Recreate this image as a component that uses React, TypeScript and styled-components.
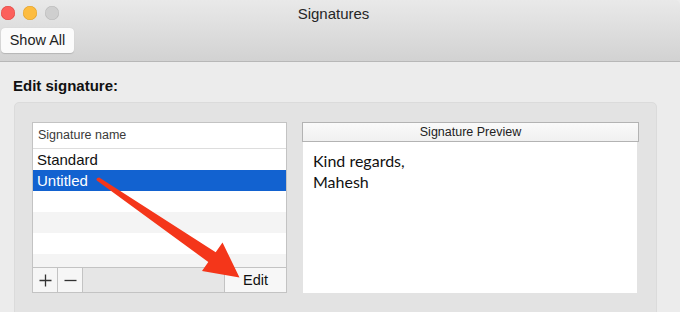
import React from 'react';
import styled, { createGlobalStyle } from 'styled-components';

const GlobalStyle = createGlobalStyle`
    html, body {
        margin: 0;
        padding: 0;
        background: #ececec;
        font-family: 'Liberation Sans', Arial, sans-serif;
        color: #1d1d1d;
    }
`;

const Window = styled.div`
    position: relative;
    width: 680px;
    height: 312px;
    overflow: hidden;
    background: #ececec;
`;

const TitleBar = styled.div`
    height: 61px;
    border-bottom: 1px solid #b7b7b7;
    border-top-right-radius: 5px;
    background: linear-gradient(#e9e9e9, #d2d2d2);
    display: flex;
    flex-direction: column;
`;

const TitleRow = styled.div`
    display: flex;
    align-items: center;
    height: 26px;
    padding-left: 1px;
`;

const Lights = styled.div`
    display: flex;
    gap: 8px;
    width: 60px;
`;

const Light = styled.span<{ $color: string; $edge: string }>`
    width: 14px;
    height: 14px;
    border-radius: 50%;
    background: ${(p) => p.$color};
    box-shadow: inset 0 0 0 0.5px ${(p) => p.$edge};
`;

const Title = styled.div`
    flex: 1;
    text-align: center;
    font-size: 15px;
    padding-right: 74px;
    color: #262626;
`;

const ToolRow = styled.div`
    display: flex;
    padding: 2px 0 0 1px;
`;

const ShowAll = styled.div`
    height: 25px;
    width: 73px;
    box-sizing: border-box;
    border-radius: 4px;
    background: #fbfbfb;
    box-shadow: 0 0.5px 1px rgba(0, 0, 0, 0.15);
    font-size: 14.5px;
    line-height: 25px;
    text-align: center;
    color: #222;
`;

const Content = styled.div`
    padding: 15px 0 0 13px;
`;

const SectionLabel = styled.div`
    font-size: 15px;
    font-weight: bold;
    line-height: 18px;
    color: #111;
`;

const GroupBox = styled.div`
    margin-top: 7px;
    margin-left: 1px;
    width: 643px;
    height: 230px;
    box-sizing: border-box;
    border: 1px solid #dbdbdb;
    border-radius: 5px;
    background: #e3e3e3;
    padding: 19px 17px 0 17px;
    display: flex;
    gap: 15px;
`;

const TableWrap = styled.div`
    width: 255px;
    height: 171px;
    box-sizing: border-box;
    border: 1px solid #c3c3c3;
    display: flex;
    flex-direction: column;
    background: #fff;
`;

const TableHeader = styled.div`
    height: 25px;
    border-bottom: 1px solid #dddddd;
    font-size: 12.5px;
    line-height: 25px;
    padding-left: 5px;
    color: #3a3a3a;
`;

const Row = styled.div<{ $selected?: boolean; $odd?: boolean }>`
    height: 21px;
    flex-shrink: 0;
    font-size: 15px;
    line-height: 21px;
    padding-left: 4px;
    color: ${(p) => (p.$selected ? '#fff' : '#111')};
    background: ${(p) => (p.$selected ? '#1262d0' : p.$odd ? '#f4f4f4' : '#fff')};
`;

const Rows = styled.div`
    flex: 1;
    overflow: hidden;
    display: flex;
    flex-direction: column;
`;

const BottomBar = styled.div`
    height: 25px;
    flex-shrink: 0;
    display: flex;
    border-top: 1px solid #c3c3c3;
    background: #e6e6e6;
    box-sizing: border-box;
`;

const SmallBtn = styled.div`
    width: 25px;
    box-sizing: border-box;
    border-right: 1px solid #c3c3c3;
    background: #f6f6f6;
    display: flex;
    align-items: center;
    justify-content: center;
`;

const EditBtn = styled.div`
    margin-left: auto;
    width: 62px;
    box-sizing: border-box;
    border-left: 1px solid #c3c3c3;
    background: #f7f7f7;
    font-size: 14.5px;
    line-height: 24px;
    text-align: center;
    color: #111;
`;

const Preview = styled.div`
    width: 337px;
    height: 171px;
    display: flex;
    flex-direction: column;
`;

const PreviewHeader = styled.div`
    height: 20px;
    box-sizing: border-box;
    border: 1px solid #b3b3b3;
    background: linear-gradient(#fafafa, #f0f0f0);
    font-size: 12.5px;
    line-height: 18px;
    text-align: center;
    color: #222;
`;

const PreviewBody = styled.div`
    flex: 1;
    margin: 0 2px 0 1px;
    background: #fff;
    padding: 8px 10px;
    font-family: Lato, 'Open Sans', sans-serif;
    font-size: 16px;
    line-height: 21px;
    color: #111;
`;

const Overlay = styled.svg`
    position: absolute;
    left: 0;
    top: 0;
    pointer-events: none;
`;

const PlusIcon = () => (
    <svg width="13" height="13" viewBox="0 0 13 13">
        <path d="M6.5 0.5v12M0.5 6.5h12" stroke="#333" strokeWidth="1.3" />
    </svg>
);

const MinusIcon = () => (
    <svg width="13" height="13" viewBox="0 0 13 13">
        <path d="M0.5 6.5h12" stroke="#333" strokeWidth="1.3" />
    </svg>
);

export default function App() {
    const filler = [false, true, false, true];
    return (
        <Window>
            <GlobalStyle />
            <TitleBar>
                <TitleRow>
                    <Lights>
                        <Light $color="#fc605c" $edge="#de4a45" />
                        <Light $color="#fdbc40" $edge="#dea12f" />
                        <Light $color="#cfcfcf" $edge="#b9b9b9" />
                    </Lights>
                    <Title>Signatures</Title>
                </TitleRow>
                <ToolRow>
                    <ShowAll>Show All</ShowAll>
                </ToolRow>
            </TitleBar>
            <Content>
                <SectionLabel>Edit signature:</SectionLabel>
                <GroupBox>
                    <TableWrap>
                        <TableHeader>Signature name</TableHeader>
                        <Rows>
                            <Row>Standard</Row>
                            <Row $selected>Untitled</Row>
                            {filler.map((odd, i) => (
                                <Row key={i} $odd={odd} />
                            ))}
                        </Rows>
                        <BottomBar>
                            <SmallBtn>
                                <PlusIcon />
                            </SmallBtn>
                            <SmallBtn>
                                <MinusIcon />
                            </SmallBtn>
                            <EditBtn>Edit</EditBtn>
                        </BottomBar>
                    </TableWrap>
                    <Preview>
                        <PreviewHeader>Signature Preview</PreviewHeader>
                        <PreviewBody>
                            Kind regards,
                            <br />
                            Mahesh
                        </PreviewBody>
                    </Preview>
                </GroupBox>
            </Content>
            <Overlay width="680" height="312" viewBox="0 0 680 312">
                <path
                    d="M96.8 180.6 L208.3 262 L202 271 L239.5 277.5 L222.5 242.5 L215.7 252.3 L99.2 177.4 Q95.5 177.5 96.8 180.6 Z"
                    fill="#f4361a"
                />
            </Overlay>
        </Window>
    );
}
